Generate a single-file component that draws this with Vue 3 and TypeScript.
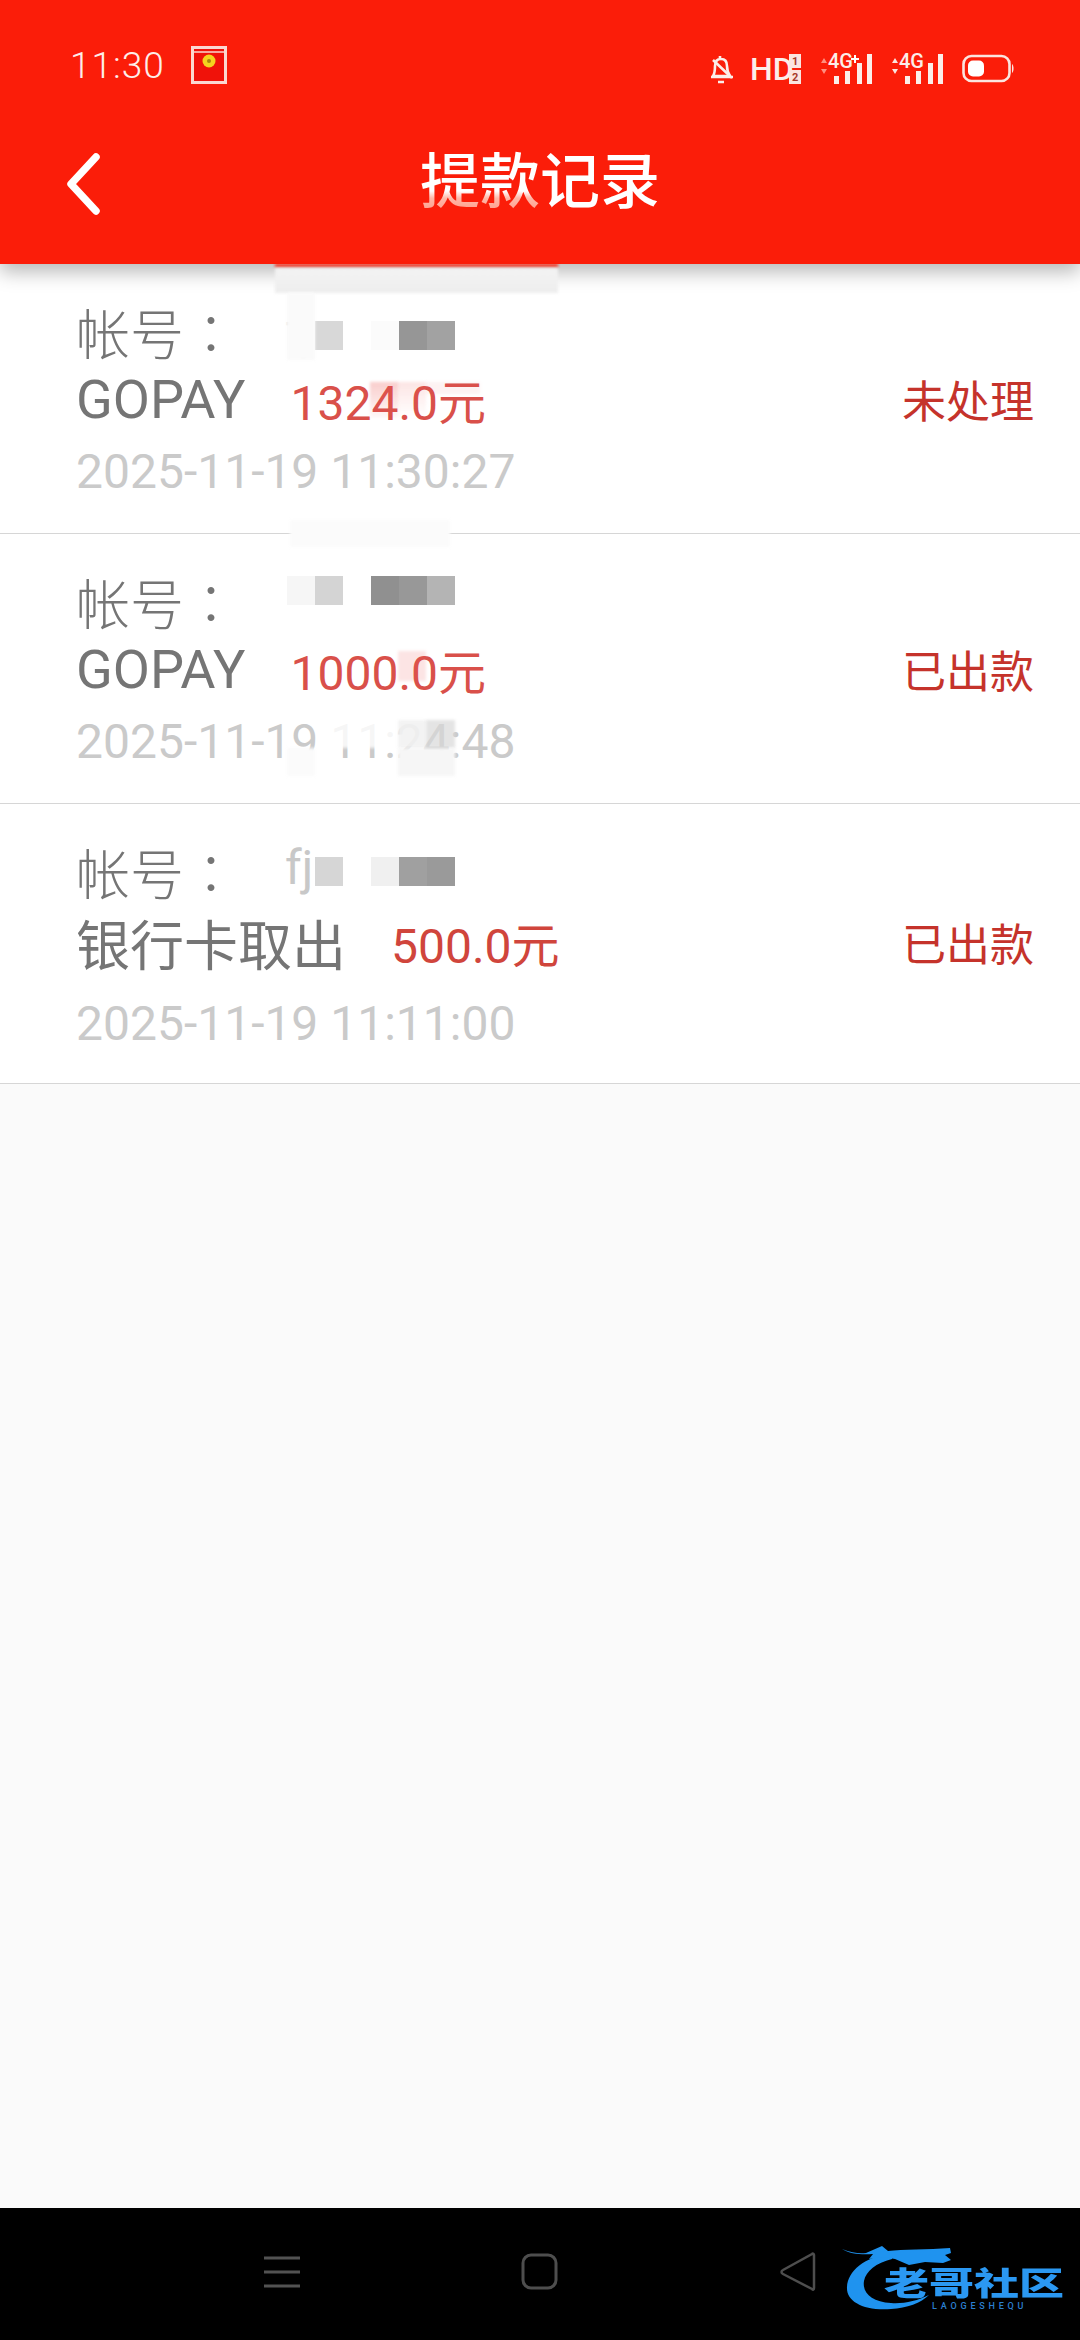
<template>
  <div class="page">
    <header class="app-header">
      <div class="status-bar">
        <div class="status-left">
          <span class="clock">11:30</span>
          <svg class="packet" width="38" height="38" viewBox="0 0 38 38">
            <rect x="1.5" y="1.5" width="33" height="35" fill="#f0120a" stroke="#fbd8d0" stroke-width="3" />
            <path d="M3 6h30" stroke="#fbd8d0" stroke-width="1.5" />
            <circle cx="18" cy="15" r="6.5" fill="#f5d21f" />
            <circle cx="18" cy="15" r="2" fill="#a8860c" />
          </svg>
        </div>
        <svg class="status-icons" width="320" height="48" viewBox="0 -8 320 48">
          <g fill="none" stroke="#fbeeea" stroke-width="2.6" transform="translate(5 0)">
            <path d="M14 4v3M7 24c2-3 2-6 2-10 0-4 2-7 6-7s6 3 6 7c0 4 1 7 3 10z" stroke-linejoin="round" />
            <path d="M5 25h22M12 30h6M7 8l19 18" />
          </g>
          <text x="49" y="28" class="hd">HD</text>
          <rect x="88" y="2" width="12" height="14" fill="#fbe5e0" />
          <rect x="88" y="18" width="12" height="14" fill="#fbe5e0" />
          <text x="91" y="13" class="tiny">1</text>
          <text x="91" y="29" class="tiny">2</text>

          <path d="M120 11l3-5 3 5zM120 17l3 5 3-5z" fill="#ff8f80" />
          <text x="127" y="16" class="net">4G</text>
          <path d="M150 7h8M154 3v8" stroke="#fff" stroke-width="2" />
          <g fill="#fbeeea">
            <rect x="133" y="24" width="5" height="8" />
            <rect x="144" y="19" width="5" height="13" />
            <rect x="156" y="11" width="5" height="21" />
            <rect x="166" y="2" width="5" height="30" />
          </g>

          <path d="M191 11l3-5 3 5zM191 17l3 5 3-5z" fill="#fbe5e0" />
          <text x="198" y="16" class="net">4G</text>
          <g fill="#fbeeea">
            <rect x="204" y="24" width="5" height="8" />
            <rect x="215" y="19" width="5" height="13" />
            <rect x="227" y="11" width="5" height="21" />
            <rect x="237" y="2" width="5" height="30" />
          </g>

          <rect x="262.500" y="4" width="46" height="25" rx="8" fill="none" stroke="#fbe5e0" stroke-width="2.6" />
          <rect x="267" y="8.500" width="16" height="16" rx="5" fill="#fff" />
          <path d="M311 12c2 1 2 8 0 9z" fill="#fbe5e0" />
        </svg>
      </div>
      <div class="nav-row">
        <svg class="back" width="34" height="62" viewBox="0 0 34 62">
          <path d="M30 4L5 31l25 27" fill="none" stroke="#fff" stroke-width="7.500" stroke-linecap="round" stroke-linejoin="round" />
        </svg>
        <h1 class="title"><span class="title-faded">提款</span>记录</h1>
      </div>
    </header>

    <main class="list">
      <section v-for="item in records" :key="item.time" class="record" :class="{ 'record-tall': item.tall }">
        <div class="account">
          <span class="account-label">帐号<span class="colon">：</span></span>
          <span class="account-mask" :style="{ transform: `translateY(${item.shift}px)` }">
            <span v-for="(cell, i) in item.cells" :key="i" class="cell" :style="{ background: cell }">
              <span v-if="i === 0 && item.prefix" class="prefix" :style="{ color: item.prefixColor }">{{ item.prefix }}</span>
            </span>
          </span>
        </div>
        <div class="pay">
          <span class="channel">{{ item.channel }}</span>
          <span class="amount">{{ item.amount }}</span>
          <span class="state">{{ item.state }}</span>
        </div>
        <div class="time">{{ item.time }}</div>
      </section>
    </main>

    <footer class="nav-bar">
      <svg width="40" height="36" viewBox="0 0 40 36">
        <path d="M2 4h36M2 18h36M2 32h36" stroke="#525252" stroke-width="3" />
      </svg>
      <svg width="40" height="40" viewBox="0 0 40 40">
        <rect x="3" y="3" width="33" height="33" rx="8" fill="none" stroke="#4e4e4e" stroke-width="3" />
      </svg>
      <svg width="40" height="42" viewBox="0 0 40 42">
        <path d="M34 3c1-1 2 0 2 1v33c0 2-1 2-2 1L5 23c-2-1-2-3 0-4z" fill="none" stroke="#4e4e4e" stroke-width="2.500" />
      </svg>
    </footer>

    <!-- censor smudges that sit over the text in the screenshot -->
    <span
      v-for="(s, i) in smudges"
      :key="i"
      class="smudge"
      :style="{ left: s[0] + 'px', top: s[1] + 'px', width: s[2] + 'px', height: s[3] + 'px', background: s[4] }"
    ></span>

    <div class="watermark">
      <svg class="dragon" width="130" height="70" viewBox="0 0 130 70">
        <path d="M50 8C22 12 6 26 5 42c-1 14 16 24 44 22 16-1 30-6 38-14-12 6-26 9-38 8C30 57 20 48 22 36 24 26 34 18 50 14z" fill="#1f93ef" />
        <path d="M0 4c10 4 18 5 24 4l16-7 6 5c14-2 40-1 62-3l1 5-6 2 6 5-8 3-18-1-16 3-14-6-12-2-14 2 4-5C20 10 8 9 0 4z" fill="#1f93ef" />
      </svg>
      <span class="wm-name">老哥社区</span>
      <span class="wm-sub">LAOGESHEQU</span>
    </div>
  </div>
</template>

<script setup lang="ts">
interface WithdrawRecord {
  cells: string[]
  shift: number
  prefix?: string
  prefixColor?: string
  channel: string
  amount: string
  state: string
  time: string
  tall?: boolean
}

const records: WithdrawRecord[] = [
  {
    cells: ['#fbfbfb', '#d8d8d8', '#fff', '#fbfbfb', '#969696', '#a2a2a2'],
    shift: 4,
    prefix: 'fj',
    prefixColor: '#e6e6e6',
    channel: 'GOPAY',
    amount: '1324.0元',
    state: '未处理',
    time: '2025-11-19 11:30:27',
  },
  {
    cells: ['#f6f6f6', '#d4d4d4', '#fff', '#909090', '#989898', '#b4b4b4'],
    shift: -11,
    channel: 'GOPAY',
    amount: '1000.0元',
    state: '已出款',
    time: '2025-11-19 11:24:48',
  },
  {
    cells: ['#fff', '#d6d6d6', '#fff', '#f0f0f0', '#a0a0a0', '#9a9a9a'],
    shift: 0,
    prefix: 'fj',
    prefixColor: '#c8c8c8',
    channel: '银行卡取出',
    amount: '500.0元',
    state: '已出款',
    time: '2025-11-19 11:11:00',
    tall: true,
  },
]

// left, top, width, height, fill
const smudges: [number, number, number, number, string][] = [
  [275, 264, 283, 3, '#fb1d09'],
  [275, 268, 283, 25, 'linear-gradient(#f3f3f3, #ededed)'],
  [287, 293, 28, 67, '#fafafa'],
  [370, 382, 28, 36, 'linear-gradient(rgba(235, 90, 85, .3), rgba(235, 90, 85, .04))'],
  [398, 382, 28, 36, 'linear-gradient(rgba(235, 90, 85, .16), rgba(235, 90, 85, 0))'],
  [426, 382, 54, 12, 'rgba(235, 90, 85, .08)'],
  [290, 520, 160, 27, '#fbfbfb'],
  [398, 651, 28, 30, 'rgba(235, 90, 85, .16)'],
  [331, 720, 67, 28, 'rgba(255, 255, 255, .82)'],
  [398, 720, 28, 28, '#f2f2f2e8'],
  [426, 720, 29, 28, '#d8d8d8b0'],
  [398, 748, 57, 28, '#f6f6f6'],
  [287, 748, 28, 28, '#fbfbfb'],
]
</script>

<style scoped>
.page {
  position: relative;
  display: flex;
  flex-direction: column;
  height: 2340px;
  overflow: hidden;
  background: #fafafa;
  font-family: Roboto, "Noto Sans CJK SC", sans-serif;
}

.app-header {
  position: relative;
  z-index: 2;
  background: #fb1d09;
  box-shadow: 0 8px 18px rgba(0, 0, 0, 0.28);
  color: #fff;
}

.status-bar {
  display: flex;
  align-items: center;
  justify-content: space-between;
  height: 130px;
  padding: 0 59px 0 70px;
}

.status-left {
  display: flex;
  align-items: center;
  gap: 26px;
}

.clock {
  font-size: 37px;
  font-weight: 300;
  letter-spacing: 1px;
  color: #fdeee9;
}

.packet {
  display: block;
}

.status-icons {
  display: block;
  margin-top: 6px;
}

.hd {
  font: 500 32px "Roboto", sans-serif;
  fill: #fbeeea;
}

.net {
  font: 500 20px "Roboto", sans-serif;
  fill: #fbeeea;
}

.tiny {
  font: 700 11px "Roboto", sans-serif;
  fill: #a83a2c;
}

.nav-row {
  position: relative;
  display: flex;
  justify-content: center;
  align-items: center;
  height: 106px;
  padding-bottom: 28px;
}

.back {
  position: absolute;
  left: 66px;
  top: 23px;
}

.title {
  margin: 0;
  font-size: 60px;
  font-weight: 500;
  line-height: 106px;
  color: #fff;
}

.title-faded {
  background: linear-gradient(#fff 62%, #ffb8a8 72%, #ff8d7c);
  -webkit-background-clip: text;
  background-clip: text;
  color: transparent;
}

.list {
  flex: 1;
}

.record {
  display: flex;
  flex-direction: column;
  padding: 32px 46px 24px 76px;
  background: #fff;
  border-bottom: 1px solid #d6d6d6;
  font-size: 48px;
}

.account {
  display: flex;
  align-items: center;
  height: 70px;
}

.account-label {
  width: 211px;
  font-size: 54px;
  font-weight: 300;
  color: #757575;
}

.colon {
  font-family: "Noto Sans CJK TC", sans-serif;
}

.account-mask {
  display: flex;
}

.cell {
  position: relative;
  width: 28px;
  height: 29px;
}

.prefix {
  position: absolute;
  left: -2px;
  top: -17px;
  font-size: 48px;
  line-height: 56px;
}

.pay {
  display: flex;
  align-items: center;
  gap: 45px;
  height: 66px;
}

.channel {
  font-size: 54px;
  color: #757575;
}

.amount {
  color: #d9504a;
}

.state {
  margin-left: auto;
  font-size: 44px;
  color: #c5332b;
}

.time {
  height: 74px;
  margin-top: 3px;
  line-height: 74px;
  color: #cacaca;
}

.record-tall {
  padding-bottom: 16px;
}

.record-tall .pay {
  height: 72px;
}

.record-tall .amount {
  color: #d0453c;
}

.record-tall .time {
  height: 86px;
  line-height: 86px;
}

.nav-bar {
  display: flex;
  align-items: center;
  justify-content: center;
  gap: 218px;
  height: 132px;
  padding-bottom: 4px;
  box-sizing: border-box;
  background: #000;
}

.smudge {
  position: absolute;
  z-index: 3;
  filter: blur(1.5px);
}

.watermark {
  position: absolute;
  left: 842px;
  top: 2245px;
  z-index: 3;
  width: 224px;
  height: 70px;
}

.dragon {
  position: absolute;
  left: 0;
  top: 0;
}

.wm-name {
  position: absolute;
  left: 42px;
  top: 21px;
  font: 900 45px/30px "Noto Sans CJK SC", sans-serif;
  color: #2b98f2;
  white-space: nowrap;
  transform: scaleY(0.72);
}

.wm-sub {
  position: absolute;
  left: 90px;
  top: 56px;
  font: 500 9px/10px Roboto, sans-serif;
  letter-spacing: 3.800px;
  color: #2a7fd0;
  white-space: nowrap;
}
</style>

<style>
html,
body {
  background: #fafafa;
}
</style>
